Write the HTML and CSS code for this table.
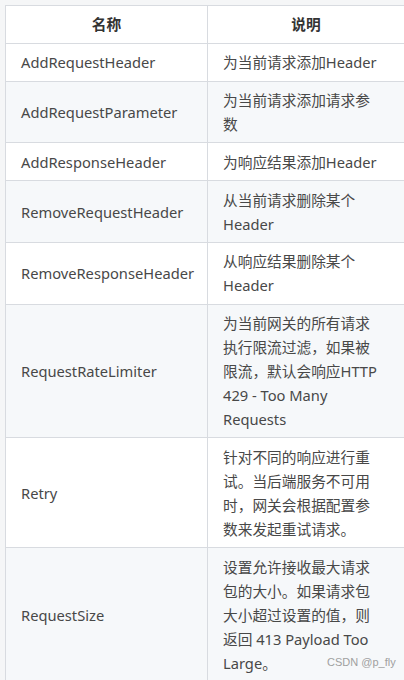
FILE: index.html
```html
<!DOCTYPE html>
<html lang="zh">
<head>
<meta charset="utf-8">
<link rel="stylesheet" href="styles.css">
</head>
<body>
<div class="wrap">
<table class="tbl">
  <thead>
    <tr><th class="c1">名称</th><th class="c2">说明</th></tr>
  </thead>
  <tbody>
    <tr><td class="c1">AddRequestHeader</td><td class="c2">为当前请求添加Header</td></tr>
    <tr class="alt"><td class="c1">AddRequestParameter</td><td class="c2">为当前请求添加请求参数</td></tr>
    <tr><td class="c1">AddResponseHeader</td><td class="c2">为响应结果添加Header</td></tr>
    <tr class="alt"><td class="c1">RemoveRequestHeader</td><td class="c2">从当前请求删除某个 Header</td></tr>
    <tr><td class="c1">RemoveResponseHeader</td><td class="c2">从响应结果删除某个 Header</td></tr>
    <tr class="alt"><td class="c1">RequestRateLimiter</td><td class="c2">为当前网关的所有请求执行限流过滤，如果被限流，默认会响应HTTP 429 - Too Many Requests</td></tr>
    <tr><td class="c1">Retry</td><td class="c2">针对不同的响应进行重试。当后端服务不可用时，网关会根据配置参数来发起重试请求。</td></tr>
    <tr class="alt"><td class="c1">RequestSize</td><td class="c2">设置允许接收最大请求包的大小。如果请求包大小超过设置的值，则返回 413 Payload Too Large。</td></tr>
  </tbody>
</table>
<span class="mark">CSDN @p_fly</span>
</div>
</body>
</html>
```

FILE: styles.css
```css
html, body {
  margin: 0;
  padding: 0;
  background: #f5f6f7;
  overflow: hidden;
}
.wrap {
  position: relative;
  padding: 5px 0 0 5px;
  width: 420px;
}
.tbl {
  border-collapse: collapse;
  table-layout: fixed;
  width: 400px;
  font-family: "Noto Sans", "Noto Sans CJK SC", sans-serif;
  font-size: 14.7px;
  line-height: 24px;
  color: #484848;
  background: #fff;
}
.tbl th, .tbl td {
  border: 1px solid #d8dbe0;
  padding: 6.4px 15px;
  text-align: left;
  vertical-align: middle;
}
.tbl th {
  font-weight: bold;
  text-align: center;
  color: #333;
}
.tbl .c1 { width: 171px; }
.tbl td.c2 { padding-right: 21px; }
.tbl tr.alt td { background: #f6f8fa; }
.mark {
  position: absolute;
  left: 327px;
  top: 656px;
  font-family: "Liberation Sans", Arial, sans-serif;
  font-size: 11px;
  color: #a0a0a0;
}
```
